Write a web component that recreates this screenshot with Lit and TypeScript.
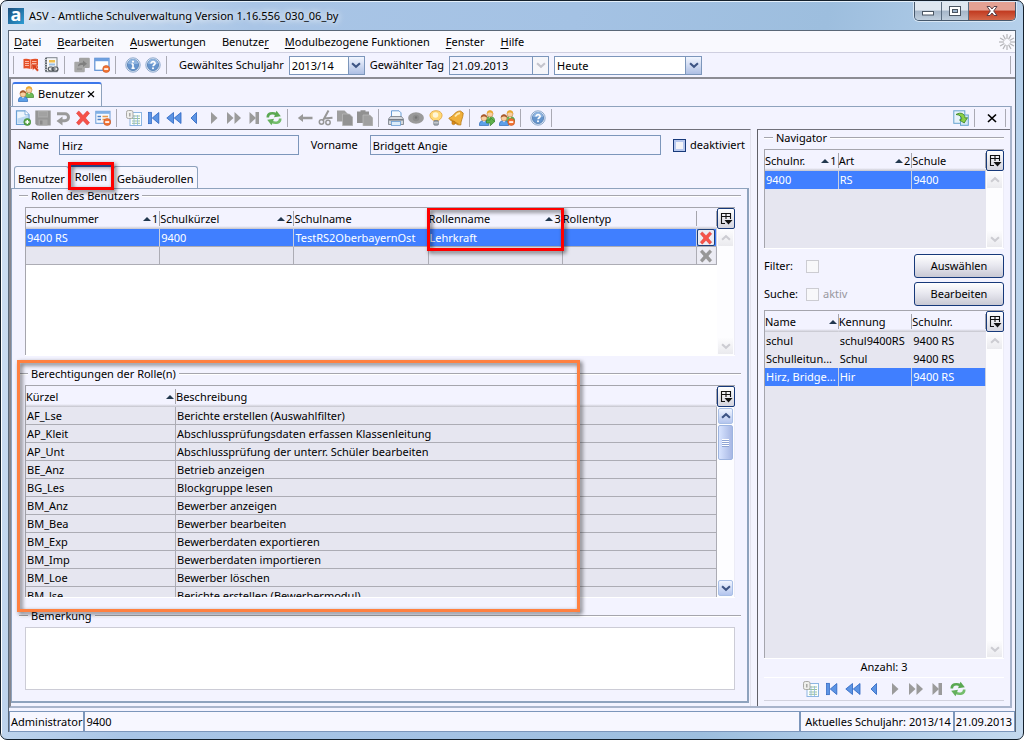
import { LitElement, html, svg, css, nothing } from "lit";
import { customElement, property } from "lit/decorators.js";
import { classMap } from "lit/directives/class-map.js";

const person = (x: number, y: number, hair: string, shirt: string, edge: string) => svg`
  <path d="M${x - 4.600} ${y + 8.500}c-.3-3.600 1.600-5 4.600-5s4.900 1.400 4.600 5z" fill=${shirt} stroke=${edge} stroke-width=".7"/>
  <path d="M${x - 1.300} ${y + 3.500}l1.300 2 1.300-2z" fill="#fff"/>
  <circle cx=${x} cy=${y + 0.9} r="3" fill="#f8cfa0" stroke="#b87838" stroke-width=".5"/>
  <path d="M${x - 3.200} ${y + 0.9}c-.4-5 6.800-5 6.400 0c-1.400-2-5-2-6.400 0z" fill=${hair}/>`;

const users = svg`${person(11, 3, "#eaa92f", "#6dbb58", "#3f8a30")}${person(5, 7, "#a85a2c", "#5b9fe8", "#2f6cb8")}`;

const minus = svg`<circle cx="12.200" cy="12" r="3.500" fill="#f27435" stroke="#c8541c" stroke-width=".6"/><rect x="10.200" y="11.200" width="4" height="1.700" fill="#fff"/>`;

const infoDisc = svg`
  <circle cx="8" cy="8" r="7.200" fill="#dbe6f3" stroke="#86a3c8" stroke-width=".9"/>
  <circle cx="8" cy="8" r="5.600" fill="#6695cd" stroke="#4674ad" stroke-width=".7"/>
  <path d="M3 7a5 5 0 0110 0z" fill="#8db3df"/>`;

const BLUE = "#5c94e4";
const BLUE_EDGE = "#2a63c0";
const GREY = "#9b9b9b";

const left = (x: number) => svg`<path d="M${x + 5.5} 2.500v11L${x} 8z" fill=${BLUE} stroke=${BLUE_EDGE} stroke-width=".8"/>`;
const right = (x: number) => svg`<path d="M${x} 2v12l6.500-6z" fill=${GREY}/>`;

const cross = (fill: string, edge: string) => svg`<path d="M1.500 3.200L3.800 1 8 5.500 12.200 1l2.300 2.200L10.400 8l4.100 4.800-2.300 2.200L8 10.500 3.800 15l-2.300-2.200L5.600 8z" fill=${fill} stroke=${edge} stroke-width=".6"/>`;

const icons: Record<string, unknown> = {
  book: svg`<path d="M.5 2q3.600-.8 7 .6q3.400-1.400 7.500-.6v9.500q-4-.8-7.500.6q-3.400-1.400-7-.6z" fill="#e5512a"/><path d="M7.500 2.600v9.500" stroke="#f9b49c" stroke-width=".8"/><path d="M2 4.500h4M2 6.500h4M2 8.500h4M9 4.500h4.500M9 6.500h4.500" stroke="#ffc4b2" stroke-width=".9" fill="none"/><path d="M8.500 7l6.500 1.500-2 1.500 2.800 3-1.600 1.500-2.800-3-1.500 1.800z" fill="#d9401c" stroke="#f6d6cc" stroke-width=".4"/>`,
  report: svg`<rect x="3" y=".7" width="11" height="14" fill="#f6f7f8" stroke="#7d838a"/><rect x="2" y="1" width="2" height="13.500" fill="#62686f"/><path d="M1 2.500h3M1 5h3M1 7.500h3M1 10h3M1 12.500h3" stroke="#c9cdd2" stroke-width=".9"/><rect x="6" y="3" width="6" height="2.500" fill="#f0bf50"/><rect x="6" y="6.500" width="6" height="2" fill="#9bc0e6"/><rect x="5.200" y="10" width="5.300" height="4" rx="2" fill="#e4e6e8" stroke="#4e545b" stroke-width="1.200"/><rect x="9.700" y="10" width="5.300" height="4" rx="2" fill="#e4e6e8" stroke="#4e545b" stroke-width="1.200"/><path d="M8 12h4.500" stroke="#4e545b" stroke-width="1.200"/>`,
  windows: svg`<rect x="5" y=".8" width="10.800" height="10.200" rx="1" fill="#a2a2a2"/><rect x=".3" y="4.800" width="10.500" height="10.500" rx="1" fill="#a8a8a8"/><path d="M4 9.500C4 6 7 5.500 9 5.500V3.500l4 3.300-4 3.200V8C7 8 5.500 8.300 4 9.500z" fill="#7f7f7f"/><path d="M3 12h5" stroke="#8a8a8a"/>`,
  closewin: svg`<rect x=".8" y="1.300" width="14.200" height="12" fill="#fdfeff" stroke="#5d8fd2" stroke-width="1.200"/><rect x="1" y="1.500" width="13.800" height="2.700" fill="#6d9fe0"/>${minus}`,
  info: svg`${infoDisc}<path d="M8 7v4M6.500 7H8M6.500 11.300h3.200" stroke="#fff" stroke-width="1.600" fill="none"/><circle cx="8" cy="4.600" r="1.100" fill="#fff"/>`,
  help: svg`${infoDisc}<path d="M6 6.500c0-2.700 4.300-2.400 4.100 0c0 1.300-2 1.200-2 2.800" stroke="#fff" stroke-width="1.600" fill="none"/><circle cx="8" cy="11.300" r="1" fill="#fff"/>`,
  users,
  add: svg`<path d="M1.500.8h8.500l4 4V14.500H1.500z" fill="#eef6fd" stroke="#6aa0d4" stroke-width="1.200"/><path d="M2.500 8.500l10.500-3v8H2.500z" fill="#bddaf3"/><path d="M10 .8v4h4" fill="#fff" stroke="#6aa0d4" stroke-width=".8"/><circle cx="12.300" cy="12" r="3.500" fill="#58a548" stroke="#3b8430" stroke-width=".6"/><path d="M12.300 10v4M10.300 12h4" stroke="#fff" stroke-width="1.400"/>`,
  save: svg`<path d="M.3.500h15.400v15H2L.3 14z" fill="#969696"/><rect x="3" y="1" width="10" height="6.500" fill="#a9a9a9"/><path d="M4 3h8M4 5h8" stroke="#9a9a9a"/><rect x="3.500" y="9.500" width="9" height="6" fill="#a6a6a6"/><rect x="5" y="10.500" width="2.500" height="4" fill="#8a8a8a"/>`,
  undo: svg`<path d="M2 3.800h8a3.500 3.500 0 010 7H6" fill="none" stroke="#9a9a9a" stroke-width="3"/><path d="M7.500 6.500v9L1.500 11z" fill="#9a9a9a"/>`,
  del: cross("#f6524a", "#dd3a34"),
  delgrey: cross("#979797", "#8b8b8b"),
  form: svg`<rect x=".8" y="1.300" width="14.200" height="12" fill="#f5f9fe" stroke="#6a9cd6"/><rect x="1" y="1.500" width="13.800" height="2.300" fill="#7fb0e6"/><path d="M2.500 6.500H6M2.500 9.500H6" stroke="#4c82c8" stroke-width="1.500"/><path d="M7.500 6.500h5.500M7.500 9.500h3" stroke="#e89a4a" stroke-width="1.300"/>${minus}`,
  table: svg`<rect x="4" y="2.500" width="11.500" height="13" fill="#fafdff" stroke="#8db6e2"/><path d="M6 6h8M6 8.500h8M6 11h8M6 13.300h8" stroke="#9cc295" stroke-width="1"/><path d="M8 5v10M11.500 5v10" stroke="#8db6e2" stroke-width=".8"/><rect x=".5" y=".5" width="6.500" height="8" rx="1.800" fill="#efefec" stroke="#a9a9a6"/><path d="M3.800 3v3.500" stroke="#9c9c9a" stroke-width="1.300"/>`,
  first: svg`<rect x="2.500" y="2.300" width="3" height="11.400" fill=${BLUE} stroke=${BLUE_EDGE} stroke-width=".7"/><path d="M12.800 2.500v11L6.300 8z" fill=${BLUE} stroke=${BLUE_EDGE} stroke-width=".8"/>`,
  fastback: svg`<path d="M7.500 2.500v11L.8 8zM15 2.500v11L8.300 8z" fill=${BLUE} stroke=${BLUE_EDGE} stroke-width=".8"/>`,
  back: left(5),
  next: right(5),
  fastnext: svg`${right(1)}${right(8.5)}`,
  last: svg`<path d="M3.500 2v12l6.500-6z" fill=${GREY}/><rect x="9.500" y="2" width="3.500" height="12" fill=${GREY}/>`,
  refresh: svg`<path d="M1.800 7.500C1.500 3.500 6 2 10.500 4.300" fill="none" stroke="#5aa852" stroke-width="2.600"/><path d="M10.500.8L14.800 6.300 8 7.200z" fill="#5aa852"/><path d="M14.200 8.500c.3 4-4.200 5.500-8.700 3.200" fill="none" stroke="#74bd6c" stroke-width="2.600"/><path d="M5.500 15.200L1.200 9.700 8 8.800z" fill="#64b05c"/>`,
  arrow: svg`<path d="M6 4v2.800h9.500v2.500H6V12L.8 8z" fill="#999"/>`,
  cut: svg`<path d="M11.500.5L6 10.500M6.500 8.500l9-.8" stroke="#979797" stroke-width="2" fill="none"/><circle cx="4.500" cy="12" r="2.200" fill="none" stroke="#979797" stroke-width="1.500"/><circle cx="11" cy="12.500" r="2.200" fill="none" stroke="#979797" stroke-width="1.500"/>`,
  copy: svg`<path d="M0 .5h7.500l3 3v8H0z" fill="#9f9f9f"/><path d="M5.500 4h7l3.300 3.300v8.500H5.500z" fill="#939393" stroke="#bcbcbc" stroke-width=".7"/>`,
  paste: svg`<path d="M0 1.500h3.500V.3h5v1.200H12V13H0z" fill="#919191"/><path d="M6 5h7l2.900 2.900v8H6z" fill="#a0a0a0" stroke="#bdbdbd" stroke-width=".7"/>`,
  print: svg`<path d="M3.500.8h7.500l2 2V8h-9.500z" fill="#f5fafe" stroke="#6a9fd6"/><path d="M2.500 6.500h11l2 2.500v5.500H.5V9z" fill="#d3d7dc" stroke="#737a83" stroke-width=".8"/><path d="M1 9.800h14" stroke="#6b727b" stroke-width="1.400"/><rect x="3.500" y="11.500" width="9" height="4" fill="#dcecf9" stroke="#6a9fd6" stroke-width=".8"/>`,
  view: svg`<ellipse cx="8" cy="8" rx="7.900" ry="5.700" fill="#9a9a9a"/><circle cx="8" cy="8" r="3.300" fill="#8d8d8d"/><circle cx="8" cy="7.500" r="1.200" fill="#747474"/>`,
  bulb: svg`<path d="M5.500 10.500C-.5 7 1.500.7 8 .7s8.500 6.300 2.500 9.800z" fill="#ffd978" stroke="#e0a23c" stroke-width=".8"/><circle cx="7.500" cy="5" r="2.800" fill="#fff6d8"/><rect x="5.700" y="10.500" width="4.800" height="4.800" rx="1.200" fill="#9aa1aa" stroke="#6d757f" stroke-width=".6"/><path d="M5.700 12.800h4.800" stroke="#e4e7ea" stroke-width=".8"/>`,
  bell: svg`<path d="M12.500 1C7 1 6.500 5.500.8 8.200l2 2.300 7 4.300 3 .2c-.3-4 2.500-7.500 2.400-12z" fill="#f0b03a" stroke="#b87a18" stroke-width=".8"/><path d="M7 6.500q2-3 5-3.500" stroke="#ffe8a8" stroke-width="1.800" fill="none"/><path d="M2.500 9.500l8 4.800" stroke="#c98820" stroke-width="1.200"/><circle cx="5.500" cy="13" r="1.700" fill="#d98b1b" stroke="#a8660c" stroke-width=".5"/>`,
  usersgo: svg`${users}<path d="M7.500 10h3.700V7.300l4.600 4.200-4.600 4.200V13H7.500z" fill="#5fb04c" stroke="#35802a" stroke-width=".7"/>`,
  usersminus: svg`${users}${minus}`,
  popout: svg`<rect x=".8" y=".8" width="11" height="12.500" fill="#e6f2fb" stroke="#66a3cf"/><rect x="7.500" y="5" width="7.800" height="10.300" fill="#d3e8f7" stroke="#66a3cf"/><path d="M3 4.500C8 1.500 12 4 12 8l2.500-.3-3.300 5.300L6.500 10l2.300-.8C8.800 6.500 6.500 4.800 3 4.500z" fill="#8cd048" stroke="#35801f" stroke-width=".8"/>`,
  close: svg`<path d="M4 4.500l8 7.500m0-7.500l-8 7.500" stroke="#000" stroke-width="1.700"/>`,
  up: svg`<path d="M3.500 10l4.500-4 4.500 4" fill="none" stroke="currentColor" stroke-width="2.400"/>`,
  down: svg`<path d="M3.500 6l4.500 4 4.500-4" fill="none" stroke="currentColor" stroke-width="2.400"/>`,
  columns: svg`<path d="M7 12.500H3.500v-10h9V8M3.500 5.500h9M8 3v5" fill="none" stroke="#111" stroke-width="1.100"/><path d="M6.500 9h8l-4 4.500z" fill="#111"/>`,
  busy: svg`<g stroke="#b4b4b8" stroke-width="1.200">${[0, 30, 60, 90, 120, 150, 180, 210, 240, 270, 300, 330].map((a) => svg`<path d="M8 0v5" transform="rotate(${a} 8 8)"/>`)}</g>`,
};

const icon = (name: string) => html`<svg class="icon" viewBox="0 0 16 16" aria-hidden="true">${icons[name]}</svg>`;

const shared = css`
  *,
  *::before,
  *::after {
    box-sizing: border-box;
  }
  .icon {
    width: 16px;
    height: 16px;
    display: block;
    flex: none;
  }
  button,
  input,
  select,
  textarea {
    font: inherit;
    color: inherit;
    margin: 0;
    padding: 0;
    border: 0;
    background: none;
    border-radius: 0;
    outline-offset: 1px;
  }
`;

interface Column {
  label: string;
  width?: number;
  sort?: string;
  mark?: boolean;
}

@customElement("tool-strip")
export class ToolStrip extends LitElement {
  @property({ attribute: false }) groups: [string, string][][] = [];
  @property({ type: Boolean }) last = false;

  static styles = [
    shared,
    css`
      :host {
        display: flex;
        align-items: center;
        height: 20px;
      }
      button {
        width: 20px;
        height: 20px;
        display: flex;
        align-items: center;
        justify-content: center;
      }
      .sep {
        width: 1px;
        height: 18px;
        background: #aaaab4;
        margin: 0 7px 0 3px;
      }
    `,
  ];

  render() {
    return this.groups.map(
      (group, i) => html`${group.map(([name, title]) => html`<button type="button" title=${title} aria-label=${title}>${icon(name)}</button>`)}
      ${i < this.groups.length - 1 || this.last ? html`<span class="sep"></span>` : nothing}`
    );
  }
}

@customElement("data-grid")
export class DataGrid extends LitElement {
  @property({ attribute: false }) columns: Column[] = [];
  @property({ attribute: false }) rows: string[][] = [];
  @property({ type: Number }) selected = -1;
  @property({ type: Boolean }) lines = false;
  @property({ type: Boolean }) white = false;
  @property({ type: Boolean }) deletable = false;
  @property({ type: Boolean }) scrolls = false;

  static styles = [
    shared,
    css`
      :host {
        display: flex;
        min-height: 0;
        border-top: 1px solid #a5a5ad;
        border-bottom: 1px solid #fff;
      }
      .body {
        flex: 1;
        min-width: 0;
        overflow: hidden;
        border-left: 1px solid #a5a5ad;
        background: #e6e6f0;
      }
      .white {
        background: #fff;
      }
      table {
        width: 100%;
        table-layout: fixed;
        border-collapse: separate;
        border-spacing: 0;
      }
      th {
        position: relative;
        height: 21px;
        padding: 0;
        font-weight: 400;
        text-align: left;
        background: #f3f3ff linear-gradient(#f3f3ff, #c4c4cc) bottom / 100% 3px no-repeat;
      }
      .head {
        display: flex;
        align-items: center;
        height: 15px;
        white-space: nowrap;
        border-right: 1px solid #a5a5ad;
        padding-right: 1px;
      }
      .sort {
        margin-left: auto;
        display: flex;
        align-items: center;
        gap: 1px;
      }
      .sort::before {
        content: "";
        border: 4px solid transparent;
        border-top: 0;
        border-bottom-color: #22384f;
      }
      .mark::after {
        content: "";
        position: absolute;
        inset: -1px -1px -22px -2px;
        border: 3px solid #f00;
        filter: drop-shadow(2px 2px 2px rgba(0, 0, 0, 0.6));
        z-index: 2;
        pointer-events: none;
      }
      td {
        height: 18px;
        padding: 0 1px;
        line-height: 16px;
        white-space: nowrap;
        overflow: hidden;
        background: #e6e6f0;
      }
      .lines td {
        border-bottom: 1px solid #acacb4;
        border-right: 1px solid #acacb4;
      }
      .chosen td {
        background: #407fff;
        color: #fff;
        border-right: 1px solid #c9cfdf;
      }
      .lines td.tool {
        padding: 0;
      }
      .tool button {
        width: 18px;
        height: 17px;
        display: flex;
        align-items: center;
        justify-content: center;
        background: #ececf4;
        border-radius: 2px;
      }
      .chosen .tool button {
        border: 1px solid #1d3f78;
      }
      .tool .icon {
        width: 14px;
        height: 14px;
      }
      .side {
        width: 18px;
        display: flex;
        flex-direction: column;
        align-items: stretch;
        background: #fdfdff;
        border-right: 1px solid #ececf6;
      }
      .pick {
        height: 21px;
        display: flex;
        align-items: center;
        justify-content: center;
        border: 1px solid #17397a;
        border-radius: 2px;
        background: linear-gradient(#fff, #d4d4de);
        margin-right: -1px;
      }
      .arrow .icon {
        width: 14px;
        height: 14px;
      }
      .arrow {
        height: 16px;
        margin: 1px;
        display: flex;
        align-items: center;
        justify-content: center;
        background: linear-gradient(#fcfcfe, #eaeaee);
        color: #ccccd2;
      }
      .active .arrow {
        background: linear-gradient(#f0f5ff, #b4c5ee);
        border: 1px solid #a9bfe6;
        border-radius: 2px;
        color: #3d5484;
      }
      .track {
        flex: 1;
      }
      .thumb {
        height: 35px;
        margin: 0 1px;
        display: flex;
        align-items: center;
        justify-content: center;
        border: 1px solid #9db4e0;
        border-radius: 2px;
        background: linear-gradient(90deg, #d8e4ff, #a7b7e4);
      }
      .grip {
        width: 7px;
        height: 8px;
        background: repeating-linear-gradient(#fff 0 1px, #8ea4d4 1px 2px);
      }
    `,
  ];

  render() {
    return html`
      <div class=${classMap({ body: true, white: this.white })}>
        <table class=${classMap({ lines: this.lines })}>
          <colgroup>
            ${this.columns.map((c) => html`<col style=${c.width ? `width:${c.width}px` : ""} />`)}
            ${this.deletable ? html`<col style="width:20px" />` : nothing}
          </colgroup>
          <thead>
            <tr>
              ${this.columns.map(
                (c) => html`<th scope="col" class=${classMap({ mark: !!c.mark })}>
                  <div class="head"><span>${c.label}</span>${c.sort !== undefined ? html`<span class="sort">${c.sort}</span>` : nothing}</div>
                </th>`
              )}
              ${this.deletable ? html`<th aria-label="Löschen"><div class="head"></div></th>` : nothing}
            </tr>
          </thead>
          <tbody>
            ${this.rows.map(
              (r, i) => html`<tr class=${classMap({ chosen: i === this.selected })}>
                ${r.map((v) => html`<td>${v}</td>`)}
                ${this.deletable
                  ? html`<td class="tool"><button type="button" aria-label="Zeile löschen">${icon(i === this.selected ? "del" : "delgrey")}</button></td>`
                  : nothing}
              </tr>`
            )}
          </tbody>
        </table>
      </div>
      <div class=${classMap({ side: true, active: this.scrolls })}>
        <button type="button" class="pick" aria-label="Spalten wählen">${icon("columns")}</button>
        <button type="button" class="arrow" aria-label="Nach oben" ?disabled=${!this.scrolls}>${icon("up")}</button>
        ${this.scrolls ? html`<div class="thumb"><span class="grip"></span></div>` : nothing}
        <div class="track"></div>
        <button type="button" class="arrow" aria-label="Nach unten" ?disabled=${!this.scrolls}>${icon("down")}</button>
      </div>
    `;
  }
}

const MENU: [string, string, string][] = [
  ["", "D", "atei"],
  ["", "B", "earbeiten"],
  ["", "A", "uswertungen"],
  ["Benutze", "r", ""],
  ["", "M", "odulbezogene Funktionen"],
  ["", "F", "enster"],
  ["", "H", "ilfe"],
];

const MAIN_TOOLS: [string, string][][] = [
  [["book", "Handbuch"], ["report", "Berichte"]],
  [["windows", "Fenster anordnen"], ["closewin", "Fenster schließen"]],
  [["info", "Info"], ["help", "Hilfe"]],
];

const EDIT_TOOLS: [string, string][][] = [
  [["add", "Neu"], ["save", "Speichern"], ["undo", "Rückgängig"], ["del", "Löschen"], ["form", "Formular"]],
  [["table", "Liste"], ["first", "Erster"], ["fastback", "Schnell zurück"], ["back", "Zurück"], ["next", "Weiter"], ["fastnext", "Schnell weiter"], ["last", "Letzter"], ["refresh", "Aktualisieren"]],
  [["arrow", "Übernehmen"], ["cut", "Ausschneiden"], ["copy", "Kopieren"], ["paste", "Einfügen"]],
  [["print", "Drucken"], ["view", "Ansicht"], ["bulb", "Hinweis"], ["bell", "Erinnerung"]],
  [["usersgo", "Benutzer übertragen"], ["usersminus", "Benutzer entfernen"]],
  [["help", "Hilfe"]],
];

const ROLE_COLUMNS: Column[] = [
  { label: "Schulnummer", sort: "1" },
  { label: "Schulkürzel", sort: "2" },
  { label: "Schulname" },
  { label: "Rollenname", sort: "3", mark: true },
  { label: "Rollentyp" },
];

const ROLES = [
  ["9400 RS", "9400", "TestRS2OberbayernOst", "Lehrkraft", ""],
  ["", "", "", "", ""],
];

const RIGHTS = [
  ["AF_Lse", "Berichte erstellen (Auswahlfilter)"],
  ["AP_Kleit", "Abschlussprüfungsdaten erfassen Klassenleitung"],
  ["AP_Unt", "Abschlussprüfung der unterr. Schüler bearbeiten"],
  ["BE_Anz", "Betrieb anzeigen"],
  ["BG_Les", "Blockgruppe lesen"],
  ["BM_Anz", "Bewerber anzeigen"],
  ["BM_Bea", "Bewerber bearbeiten"],
  ["BM_Exp", "Bewerberdaten exportieren"],
  ["BM_Imp", "Bewerberdaten importieren"],
  ["BM_Loe", "Bewerber löschen"],
  ["BM_lse", "Berichte erstellen (Bewerbermodul)"],
];

@customElement("app-root")
export class AppRoot extends LitElement {
  static styles = [
    shared,
    css`
      :host {
        display: block;
        height: 100vh;
        min-height: 600px;
        font: 11px/16px "Noto Sans", "Open Sans", sans-serif;
        color: #000;
        background: #fff;
      }
      .window {
        height: 100%;
        display: flex;
        flex-direction: column;
        border: 1px solid #14202c;
        border-radius: 7px;
        padding: 0 7px;
        background: linear-gradient(90deg, #fff 0 1px, transparent 1px),
          linear-gradient(100deg, #d4e3f4 0, #a9c5e6 22%, #a4c2e4 50%, #9dbede 72%, #b4cfea 88%, #c4d9ee 100%);
        padding-bottom: 7px;
      }
      .title {
        height: 29px;
        flex: none;
        display: flex;
        align-items: center;
        gap: 5px;
        border-top: 1px solid #e4f0fb;
      }
      .title h1 {
        margin: 0;
        font: inherit;
        flex: 1;
        text-shadow: 0 0 6px #fff, 0 0 8px #fff;
      }
      .logo {
        width: 16px;
        height: 16px;
        background: linear-gradient(135deg, #1c4f7c, #2b9bd4);
        color: #fff;
        font: 700 18px/12px "Open Sans", sans-serif;
        text-align: center;
      }
      .winbuttons {
        display: flex;
        align-self: flex-start;
        border: 1px solid #46586c;
        border-top: 0;
        border-radius: 0 0 5px 5px;
        overflow: hidden;
        box-shadow: 0 0 0 1px #d8e6f4;
      }
      .winbuttons button {
        width: 27px;
        height: 18px;
        display: flex;
        align-items: center;
        justify-content: center;
        border-right: 1px solid #5a6c80;
        background: linear-gradient(#dfe7f0 0 45%, #a5b6c9 50%, #c0cfde);
      }
      .winbuttons .shut {
        width: 46px;
        border-right: 0;
        background: linear-gradient(#e3a193 0 45%, #c13a20 50%, #d5684a);
      }
      .client {
        flex: 1;
        min-height: 0;
        display: flex;
        flex-direction: column;
        border: 1px solid #5a6878;
        border-bottom: 0;
        background: #f3f3ff;
      }
      .menu {
        display: flex;
        align-items: center;
        gap: 16px;
        height: 22px;
        flex: none;
        padding-left: 5px;
        background: #f9f9fe;
        border-bottom: 1px solid #cfcfe0;
      }
      .menu u {
        text-underline-offset: 2px;
      }
      .menu .busy {
        margin-left: auto;
      }
      .toolbar {
        display: flex;
        align-items: center;
        height: 26px;
        flex: none;
        padding-left: 4px;
        border-bottom: 2px solid #8c8c94;
      }
      .handle {
        width: 1px;
        height: 18px;
        background: #aaaab4;
        margin-right: 7px;
      }
      .toolbar label {
        margin: 0 5px;
      }
      .end {
        margin-left: auto;
        margin-right: 4px;
      }
      .combo {
        display: grid;
        height: 19px;
        border: 1px solid #7c96bb;
        background: #fff;
      }
      .combo select,
      .combo input {
        grid-area: 1 / 1;
        width: 100%;
        min-width: 0;
        height: 17px;
        padding: 0 18px 0 2px;
        appearance: none;
        line-height: 17px;
      }
      .combo .drop {
        grid-area: 1 / 1;
        justify-self: end;
        width: 16px;
        height: 17px;
        display: flex;
        align-items: center;
        justify-content: center;
        pointer-events: none;
        color: #3d5484;
        border-left: 1px solid #7c96bb;
        background: linear-gradient(#f2f6ff, #aebfe4);
      }
      .drop .icon {
        width: 14px;
        height: 14px;
      }
      .year {
        width: 76px;
      }
      .day {
        width: 100px;
        margin-right: 5px;
        background: #f3f3ff;
      }
      .day .drop {
        color: #c4c4cc;
        background: #f6f6fa;
      }
      .when {
        width: 148px;
      }
      .doctabs {
        height: 27px;
        flex: none;
        display: flex;
        align-items: flex-end;
        padding-left: 1px;
        border-left: 2px solid #85858d;
      }
      .doctab {
        display: flex;
        align-items: center;
        height: 24px;
        border: 1px solid #8ea2bd;
        border-top: 2px solid #3c77ea;
        border-bottom: 0;
        border-radius: 3px 3px 0 0;
        padding: 0 4px 2px 5px;
        background: linear-gradient(#fff, #f6f6ff);
      }
      .doctab span {
        margin-left: 4px;
      }
      .doctab button {
        display: flex;
      }
      .doctab button .icon {
        width: 12px;
        height: 12px;
      }
      .work {
        flex: 1;
        min-height: 0;
        display: flex;
        flex-direction: column;
        margin-right: 3px;
        border-left: 2px solid #85858d;
        border-right: 2px solid #a9b4cb;
        border-top: 1px solid #8ea2bd;
        border-bottom: 2px solid #a9b4cb;
      }
      .strip {
        height: 22px;
        flex: none;
        display: flex;
        align-items: center;
        padding-left: 2px;
      }
      .strip .out {
        margin-left: auto;
        margin-right: -3px;
      }
      .columns {
        flex: 1;
        min-height: 0;
        display: flex;
        gap: 6px;
      }
      .main {
        flex: 1;
        min-width: 0;
        display: flex;
        flex-direction: column;
        border-top: 1px solid #70707a;
        border-right: 1px solid #e2e2ee;
        padding: 5px 1px 3px 0;
      }
      .person {
        display: flex;
        align-items: center;
        padding: 0 4px 0 7px;
        flex: none;
      }
      .field {
        height: 20px;
        border: 1px solid #7c96bb;
        padding: 0 2px;
        min-width: 0;
      }
      .name {
        flex: 240;
        margin: 0 12px 0 10px;
      }
      .given {
        flex: 293;
        margin: 0 12px;
      }
      input[type="checkbox"] {
        appearance: none;
        width: 13px;
        height: 13px;
        border: 1px solid #ccccd2;
        background: #f8f8fa;
        flex: none;
      }
      input.off {
        border: 1px solid #17397a;
        background: #f4f4f8;
        box-shadow: inset 0 0 0 2px #b7c8ee;
        margin-right: 4px;
      }
      .tabs {
        display: flex;
        align-items: flex-end;
        height: 22px;
        flex: none;
        margin-top: 11px;
        padding-left: 3px;
      }
      .tab {
        position: relative;
        height: 22px;
        padding: 2px 3px 0;
        border: 1px solid #8ea2bd;
        border-bottom: 0;
        border-radius: 3px 3px 0 0;
        background: #f7f7ff;
      }
      .tab.on {
        height: 24px;
        padding: 0 5px 2px;
        border-top: 3px solid #3560b8;
        background: #f3f3ff;
        z-index: 1;
      }
      .tab.on::after {
        content: "";
        position: absolute;
        inset: -5px -2px -2px -2px;
        border: 3px solid #f00;
        filter: drop-shadow(2px 2px 2px rgba(0, 0, 0, 0.6));
        pointer-events: none;
      }
      .pane {
        flex: 1;
        min-height: 0;
        display: flex;
        flex-direction: column;
        gap: 11px;
        border: 1px solid #8ea2bd;
        border-right-width: 2px;
        border-bottom-width: 2px;
        padding: 0 6px 11px 7px;
      }
      .group {
        position: relative;
        display: flex;
        flex-direction: column;
        min-height: 0;
      }
      h2 {
        margin: 0 0 4px;
        font: inherit;
        line-height: 14px;
        height: 14px;
        flex: none;
        display: flex;
        align-items: center;
        gap: 3px;
      }
      h2::before,
      h2::after {
        content: "";
        height: 2px;
        width: 9px;
        border-top: 1px solid #a5a5ad;
        background: #fff;
      }
      h2::after {
        flex: 1;
      }
      .pane data-grid,
      .pane textarea {
        margin: 0 6px;
      }
      .roles {
        flex: 0 0 167px;
      }
      .rights {
        flex: 1;
      }
      .roles data-grid,
      .rights data-grid {
        flex: 1;
      }
      .rights::after {
        content: "";
        position: absolute;
        top: -7px;
        bottom: -14px;
        left: -2px;
        width: 78%;
        border: 3px solid #ff8040;
        filter: drop-shadow(2px 2px 2px rgba(0, 0, 0, 0.6));
        z-index: 2;
        pointer-events: none;
      }
      .note textarea {
        height: 63px;
        border: 1px solid #ccccd6;
        background: #fff;
        resize: none;
        display: block;
      }
      .nav {
        width: 253px;
        flex: none;
        display: flex;
        flex-direction: column;
        border-top: 1px solid #70707a;
        border-left: 1px solid #606068;
        padding: 1px 6px 5px;
      }
      .schools {
        height: 100px;
        flex: none;
      }
      .filters {
        display: grid;
        grid-template-columns: 42px 13px 1fr 90px;
        gap: 4px 0;
        align-items: center;
        margin: 5px 0 4px;
      }
      .filters .dim {
        color: #98989e;
        padding-left: 4px;
      }
      .filters button {
        grid-column: 4;
        height: 24px;
        border: 1px solid #17397a;
        border-radius: 3px;
        background: linear-gradient(#fff, #e6e6ee 50%, #c9c9d4);
      }
      .people {
        flex: 1;
      }
      .count {
        text-align: center;
        height: 18px;
        flex: none;
      }
      .pager {
        display: flex;
        justify-content: center;
        border-top: 1px solid #fff;
        border-bottom: 1px solid #d2d2de;
        padding: 1px 0;
      }
      .pager tool-strip {
        gap: 1px;
      }
      .status {
        display: flex;
        flex: none;
        height: 21px;
        margin-top: 3px;
        border: 1px solid #7c96bb;
        line-height: 19px;
        background: #f7f7ff;
      }
      .status span {
        padding: 0 1px;
        border-right: 2px solid #7c96bb;
      }
      .status .fill {
        flex: 1;
      }
      .status .schoolyear {
        padding: 0 2px 0 4px;
      }
      .status .today {
        border-right: 0;
        padding: 0 2px 0 1px;
      }
    `,
  ];

  render() {
    return html`
      <div class="window">
        <header class="title">
          <span class="logo" aria-hidden="true">a</span>
          <h1>ASV - Amtliche Schulverwaltung Version 1.16.556_030_06_by</h1>
          <div class="winbuttons">
            <button type="button" aria-label="Minimieren">
              <svg width="14" height="12" viewBox="0 0 14 12"><rect x="1.500" y="6.500" width="11" height="3.500" fill="#fff" stroke="#4a5562" /></svg>
            </button>
            <button type="button" aria-label="Maximieren">
              <svg width="14" height="12" viewBox="0 0 14 12"><rect x="1.500" y="1.500" width="11" height="9" fill="#fff" stroke="#4a5562" /><rect x="4.500" y="4.500" width="5" height="3" fill="#9db4cc" stroke="#4a5562" /></svg>
            </button>
            <button type="button" class="shut" aria-label="Schließen">
              <svg width="14" height="12" viewBox="0 0 14 12"><path d="M2 1.500h3l2 2.500 2-2.500h3L8.700 6l3.300 4.500H9L7 8l-2 2.500H2L5.300 6z" fill="#fff" stroke="#5a4048" /></svg>
            </button>
          </div>
        </header>
        <div class="client">
          <nav class="menu">
            ${MENU.map(([a, u, b]) => html`<button type="button">${a}<u>${u}</u>${b}</button>`)}
            <span class="busy">${icon("busy")}</span>
          </nav>
          <div class="toolbar">
            <span class="handle"></span>
            <tool-strip .groups=${MAIN_TOOLS} last></tool-strip>
            <label for="year">Gewähltes Schuljahr</label>
            <span class="combo year">
              <select id="year"><option>2013/14</option></select>
              <span class="drop">${icon("down")}</span>
            </span>
            <label for="day">Gewählter Tag</label>
            <span class="combo day">
              <input id="day" value="21.09.2013" />
              <span class="drop">${icon("down")}</span>
            </span>
            <span class="combo when">
              <select aria-label="Zeitpunkt"><option>Heute</option></select>
              <span class="drop">${icon("down")}</span>
            </span>
            <span class="handle end"></span>
          </div>
          <div class="doctabs">
            <div class="doctab">
              ${icon("users")}<span>Benutzer</span>
              <button type="button" aria-label="Reiter schließen">${icon("close")}</button>
            </div>
          </div>
          <div class="work">
            <div class="strip">
              <tool-strip .groups=${EDIT_TOOLS} last></tool-strip>
              <tool-strip class="out" .groups=${[[["popout", "Abdocken"]], [["close", "Schließen"]]]} last></tool-strip>
            </div>
            <div class="columns">
              <main class="main">
                <div class="person">
                  <label for="name">Name</label>
                  <input id="name" class="field name" value="Hirz" />
                  <label for="given">Vorname</label>
                  <input id="given" class="field given" value="Bridgett Angie" />
                  <input type="checkbox" id="off" class="off" />
                  <label for="off">deaktiviert</label>
                </div>
                <div class="tabs" role="tablist">
                  <button type="button" role="tab" class="tab">Benutzer</button>
                  <button type="button" role="tab" class="tab on" aria-selected="true">Rollen</button>
                  <button type="button" role="tab" class="tab">Gebäuderollen</button>
                </div>
                <div class="pane">
                  <section class="group roles">
                    <h2>Rollen des Benutzers</h2>
                    <data-grid .columns=${ROLE_COLUMNS} .rows=${ROLES} .selected=${0} lines white deletable></data-grid>
                  </section>
                  <section class="group rights">
                    <h2>Berechtigungen der Rolle(n)</h2>
                    <data-grid .columns=${[{ label: "Kürzel", width: 150, sort: "" }, { label: "Beschreibung" }]} .rows=${RIGHTS} lines scrolls></data-grid>
                  </section>
                  <section class="group note">
                    <h2><label for="note">Bemerkung</label></h2>
                    <textarea id="note"></textarea>
                  </section>
                </div>
              </main>
              <aside class="nav">
                <h2>Navigator</h2>
                <data-grid
                  class="schools"
                  .columns=${[{ label: "Schulnr.", sort: "1" }, { label: "Art", sort: "2" }, { label: "Schule" }]}
                  .rows=${[["9400", "RS", "9400"]]}
                  .selected=${0}
                ></data-grid>
                <div class="filters">
                  <label for="filter">Filter:</label>
                  <input type="checkbox" id="filter" disabled />
                  <button type="button">Auswählen</button>
                  <span>Suche:</span>
                  <input type="checkbox" id="search" disabled />
                  <label for="search" class="dim">aktiv</label>
                  <button type="button">Bearbeiten</button>
                </div>
                <data-grid
                  class="people"
                  .columns=${[{ label: "Name", sort: "" }, { label: "Kennung" }, { label: "Schulnr." }]}
                  .rows=${[["schul", "schul9400RS", "9400 RS"], ["Schulleitun...", "Schul", "9400 RS"], ["Hirz, Bridge...", "Hir", "9400 RS"]]}
                  .selected=${2}
                ></data-grid>
                <div class="count">Anzahl: 3</div>
                <div class="pager"><tool-strip .groups=${[EDIT_TOOLS[1]]}></tool-strip></div>
              </aside>
            </div>
          </div>
          <footer class="status">
            <span>Administrator</span><span class="fill">9400</span><span class="schoolyear">Aktuelles Schuljahr: 2013/14</span><span class="today">21.09.2013</span>
          </footer>
        </div>
      </div>
    `;
  }
}
